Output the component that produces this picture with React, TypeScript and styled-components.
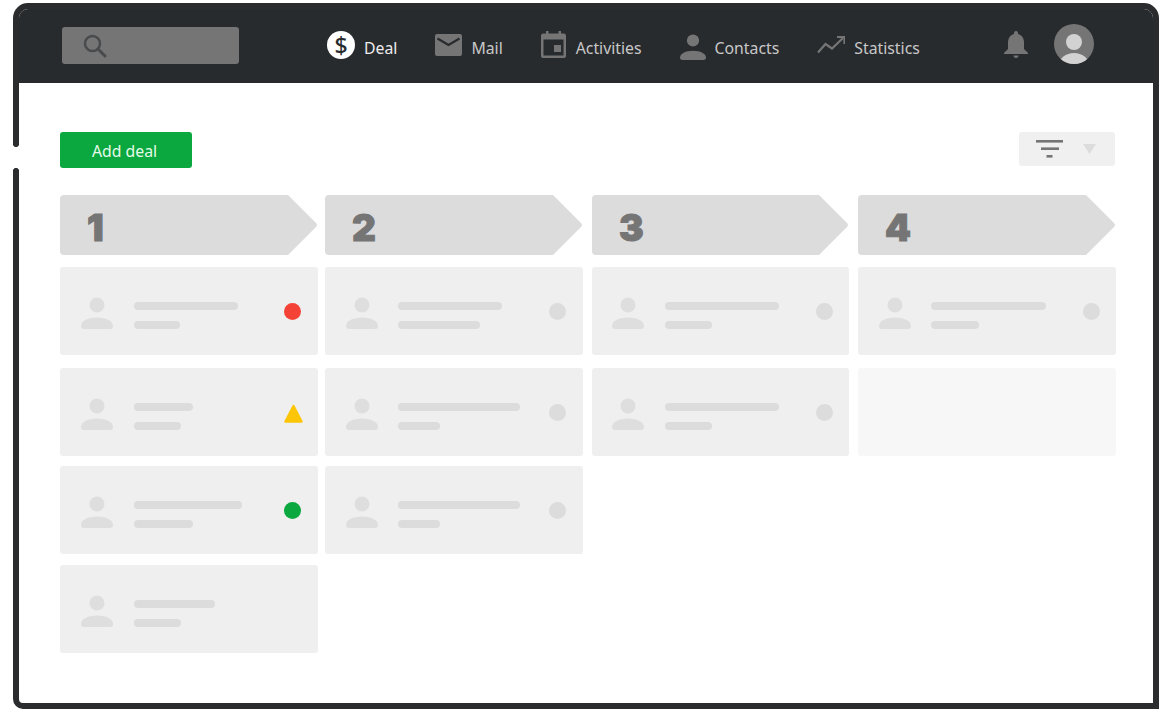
import { createGlobalStyle, styled } from "styled-components";

const GlobalStyle = createGlobalStyle`
  html, body {
    margin: 0;
    padding: 0;
    background: #fff;
    overflow: hidden;
  }
  body {
    font-family: "Noto Sans", "Liberation Sans", sans-serif;
  }
`;

const Frame = styled.div`
  position: relative;
  box-sizing: border-box;
  width: 1146px;
  height: 706px;
  margin: 3px 0 0 13px;
  background: #fff;
  border: 6px solid #2a2c2e;
  border-radius: 15px 15px 0 10px;
`;

// the break in the left edge of the window
const Notch = styled.div`
  position: absolute;
  left: -6px;
  top: 138px;
  width: 6px;
  height: 21px;
  background: #fff;

  &::before,
  &::after {
    content: "";
    position: absolute;
    left: 0;
    width: 6px;
    height: 3px;
  }
  &::before {
    top: -3px;
    background: radial-gradient(ellipse 3px 3px at 50% 0, #2a2c2e 96%, #fff 100%);
  }
  &::after {
    bottom: -3px;
    background: radial-gradient(ellipse 3px 3px at 50% 100%, #2a2c2e 96%, #fff 100%);
  }
`;

const Header = styled.header`
  display: flex;
  align-items: center;
  height: 74px;
  padding: 0 59px 0 43px;
  box-sizing: border-box;
  background: #282b2e;
  border-radius: 9px 9px 0 0;
`;

const Search = styled.div`
  display: flex;
  align-items: center;
  box-sizing: border-box;
  width: 177px;
  height: 37px;
  margin-bottom: 1px;
  padding-left: 21px;
  background: #757575;
  border-radius: 3px;
`;

const Nav = styled.nav`
  display: flex;
  align-items: center;
  gap: 38px;
  margin-left: 88px;
`;

const NavItem = styled.a<{ $active?: boolean }>`
  display: flex;
  align-items: center;
  gap: 9px;
  padding-top: 3px;
  font-size: 15.8px;
  line-height: 22px;
  color: ${(p) => (p.$active ? "#ececec" : "#c8c8c8")};

  & > svg,
  & > span {
    margin-bottom: 6px;
  }
`;

const DealBadge = styled.span`
  display: flex;
  align-items: center;
  justify-content: center;
  width: 28px;
  height: 28px;
  border-radius: 50%;
  background: #fff;
  color: #282b2e;
  font-size: 23px;
  font-weight: 500;
`;

const CalendarIcon = styled.svg`
  margin-right: 1px;
`;

const HeaderRight = styled.div`
  display: flex;
  align-items: center;
  gap: 26px;
  margin-left: auto;
  margin-top: -4px;
`;

const Main = styled.main`
  padding: 49px 37px 0 41px;
`;

const Toolbar = styled.div`
  display: flex;
  align-items: flex-start;
  justify-content: space-between;
  height: 36px;
  margin-bottom: 27px;
`;

const AddButton = styled.button`
  width: 132px;
  height: 36px;
  padding: 2px 3px 0 0;
  border: 0;
  border-radius: 3px;
  background: #0aa83f;
  color: #e6fbe9;
  font-family: inherit;
  font-size: 15.8px;
  font-weight: 400;
`;

const FilterButton = styled.button`
  display: flex;
  align-items: center;
  gap: 19px;
  box-sizing: border-box;
  width: 96px;
  height: 34px;
  margin-right: 1px;
  padding: 0 0 0 17px;
  border: 0;
  border-radius: 3px;
  background: #f0f0f0;
`;

const Board = styled.div`
  display: grid;
  grid-template-columns: 265px 267px 266px 258px;
`;

const Column = styled.section`
  display: grid;
  grid-template-rows: 72px 101px 98px 99px 88px;
  align-items: start;
  padding-right: 9px;

  &:first-child {
    padding-right: 7px;
  }
  &:last-child {
    padding-right: 0;
  }
`;

const Stage = styled.div`
  box-sizing: border-box;
  height: 60px;
  padding-left: 27px;
  background: #dcdcdc;
  border-radius: 4px;
  clip-path: polygon(
    0 0,
    calc(100% - 30px) 0,
    calc(100% - 2px) calc(50% - 2px),
    calc(100% - 0.8px) 50%,
    calc(100% - 2px) calc(50% + 2px),
    calc(100% - 30px) 100%,
    0 100%
  );
  color: #757575;
  font-family: Inter, "Liberation Sans", sans-serif;
  font-size: 37px;
  font-weight: 900;
  line-height: 65px;
  -webkit-text-stroke: 1px #757575;
`;

const Card = styled.article<{ $empty?: boolean; $left: number; $right: number }>`
  display: flex;
  align-items: center;
  box-sizing: border-box;
  height: 88px;
  padding: 0 ${(p) => p.$right}px 0 ${(p) => p.$left}px;
  background: ${(p) => (p.$empty ? "#f7f7f7" : "#efefef")};
  border-radius: 3px;
`;

const Avatar = styled.svg`
  flex: none;
  margin-top: 4px;
`;

const Lines = styled.div<{ $offset: number }>`
  display: flex;
  flex: 1;
  flex-direction: column;
  gap: 11px;
  margin: 8px 0 0 ${(p) => p.$offset}px;
`;

const Line = styled.div`
  height: 8px;
  border-radius: 4px;
  background: #dcdcdc;
`;

const Dot = styled.div<{ $color?: string }>`
  flex: none;
  width: 17px;
  height: 17px;
  border-radius: 50%;
  background: ${(p) => p.$color ?? "#dcdcdc"};
`;

const Warning = styled.svg`
  flex: none;
  margin: 2px -2px 0 0;
`;

type Status = "red" | "green" | "warn" | "idle" | "none";

interface Deal {
  top?: number;
  bottom?: number;
  status?: Status;
  empty?: boolean;
}

interface StageData {
  label: string;
  left: number;
  right: number;
  offset: number;
  deals: Deal[];
}

const stages: StageData[] = [
  {
    label: "1",
    left: 21,
    right: 17,
    offset: 21,
    deals: [
      { top: 104, bottom: 46, status: "red" },
      { top: 59, bottom: 47, status: "warn" },
      { top: 108, bottom: 59, status: "green" },
      { top: 81, bottom: 47, status: "none" },
    ],
  },
  {
    label: "2",
    left: 21,
    right: 17,
    offset: 20,
    deals: [
      { top: 104, bottom: 82 },
      { top: 122, bottom: 42 },
      { top: 122, bottom: 42 },
    ],
  },
  {
    label: "3",
    left: 20,
    right: 16,
    offset: 21,
    deals: [
      { top: 114, bottom: 47 },
      { top: 114, bottom: 47 },
    ],
  },
  {
    label: "4",
    left: 21,
    right: 16,
    offset: 20,
    deals: [{ top: 115, bottom: 48 }, { empty: true }],
  },
];

function Person({ size = 32, color = "#dedede" }: { size?: number; color?: string }) {
  return (
    <Avatar width={size} height={size} viewBox="0 0 32 32">
      <circle cx="16" cy="8" r="7.5" fill={color} />
      <path d="M0 29C0 24 7 20.5 16 20.5S32 24 32 29C32 31 31 32 29 32H3C1 32 0 31 0 29Z" fill={color} />
    </Avatar>
  );
}

function StatusMark({ status }: { status?: Status }) {
  if (status === "none") return null;
  if (status === "warn") {
    return (
      <Warning width="19" height="19" viewBox="0 0 19 19">
        <path d="M9.5 2L17.5 17.5H1.5Z" fill="#fcc507" stroke="#fcc507" strokeWidth="2.4" strokeLinejoin="round" />
      </Warning>
    );
  }
  if (status === "red") return <Dot $color="#f44336" />;
  if (status === "green") return <Dot $color="#0aa83f" />;
  return <Dot />;
}

function DealCard({ deal, stage }: { deal: Deal; stage: StageData }) {
  if (deal.empty) return <Card $empty $left={stage.left} $right={stage.right} />;
  return (
    <Card $left={stage.left} $right={stage.right}>
      <Person />
      <Lines $offset={stage.offset}>
        <Line style={{ width: deal.top }} />
        <Line style={{ width: deal.bottom }} />
      </Lines>
      <StatusMark status={deal.status} />
    </Card>
  );
}

export default function App() {
  return (
    <>
      <GlobalStyle />
      <Frame>
        <Notch />
        <Header>
          <Search>
            <svg width="24" height="24" viewBox="0 0 24 24" fill="none">
              <circle cx="9.5" cy="9.5" r="7.5" stroke="#484a4c" strokeWidth="2.4" />
              <path d="M15 15L22 22" stroke="#484a4c" strokeWidth="3" strokeLinecap="round" />
            </svg>
          </Search>
          <Nav>
            <NavItem $active>
              <DealBadge>$</DealBadge>
              Deal
            </NavItem>
            <NavItem>
              <svg width="27" height="22" viewBox="0 0 27 22">
                <rect width="27" height="22" rx="2" fill="#757575" />
                <path d="M2.5 4.5L13.5 11L24.5 4.5" fill="none" stroke="#282b2e" strokeWidth="2.2" />
              </svg>
              Mail
            </NavItem>
            <NavItem>
              <CalendarIcon width="25" height="27" viewBox="0 0 25 27">
                <rect x="5" y="0" width="2.5" height="4" fill="#757575" />
                <rect x="17.5" y="0" width="2.5" height="4" fill="#757575" />
                <path
                  d="M2 2.5H23C24 2.5 25 3.5 25 4.5V25C25 26 24 27 23 27H2C1 27 0 26 0 25V4.5C0 3.5 1 2.5 2 2.5ZM2.5 8.5V24.5H22.5V8.5Z"
                  fill="#757575"
                  fillRule="evenodd"
                />
                <rect x="13" y="14" width="7" height="7" fill="#757575" />
              </CalendarIcon>
              Activities
            </NavItem>
            <NavItem>
              <Person size={26} color="#757575" />
              Contacts
            </NavItem>
            <NavItem>
              <svg width="28" height="18" viewBox="0 0 28 18" fill="none">
                <path d="M1 16.5L8.5 8L15 12.5L26 2" stroke="#757575" strokeWidth="2.2" />
                <path d="M20 0.8H27.5V8" stroke="#757575" strokeWidth="2.2" />
              </svg>
              Statistics
            </NavItem>
          </Nav>
          <HeaderRight>
            <svg width="24" height="27" viewBox="0 0 24 27">
              <path
                d="M12 0C13.2 0 14 .9 14 2V3C18 4 20 7.5 20 11.5V18L24 22V23H0V22L4 18V11.5C4 7.5 6 4 10 3V2C10 .9 10.8 0 12 0Z"
                fill="#757575"
              />
              <path d="M9.5 24.5H14.5C14.5 26 13.5 27 12 27S9.5 26 9.5 24.5Z" fill="#757575" />
            </svg>
            <svg width="40" height="40" viewBox="0 0 40 40">
              <defs>
                <clipPath id="avatar-clip">
                  <circle cx="20" cy="20" r="20" />
                </clipPath>
              </defs>
              <circle cx="20" cy="20" r="20" fill="#757575" />
              <circle cx="20" cy="18" r="8" fill="#d2d2d2" />
              <ellipse cx="20" cy="41" rx="15" ry="12" fill="#d2d2d2" clipPath="url(#avatar-clip)" />
            </svg>
          </HeaderRight>
        </Header>
        <Main>
          <Toolbar>
            <AddButton>Add deal</AddButton>
            <FilterButton>
              <svg width="28" height="18" viewBox="0 0 28 18">
                <rect x="0" y="0" width="27" height="2.6" fill="#757575" />
                <rect x="5" y="7.4" width="18" height="2.6" fill="#757575" />
                <rect x="10.5" y="15" width="6" height="2.6" fill="#757575" />
              </svg>
              <svg width="13" height="10" viewBox="0 0 13 10">
                <path d="M0 0H13L6.5 10Z" fill="#dcdcdc" />
              </svg>
            </FilterButton>
          </Toolbar>
          <Board>
            {stages.map((stage) => (
              <Column key={stage.label}>
                <Stage>{stage.label}</Stage>
                {stage.deals.map((deal, i) => (
                  <DealCard key={i} deal={deal} stage={stage} />
                ))}
              </Column>
            ))}
          </Board>
        </Main>
      </Frame>
    </>
  );
}
